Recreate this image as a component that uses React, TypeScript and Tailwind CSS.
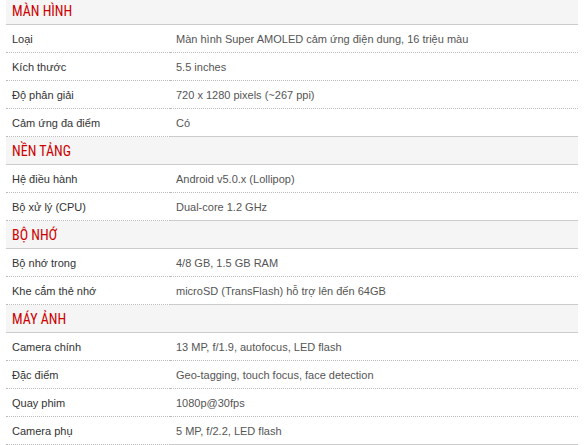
const sections: { title: string; rows: [string, string][] }[] = [
  {
    title: 'MÀN HÌNH',
    rows: [
      ['Loại', 'Màn hình Super AMOLED cảm ứng điện dung, 16 triệu màu'],
      ['Kích thước', '5.5 inches'],
      ['Độ phân giải', '720 x 1280 pixels (~267 ppi)'],
      ['Cảm ứng đa điểm', 'Có'],
    ],
  },
  {
    title: 'NỀN TẢNG',
    rows: [
      ['Hệ điều hành', 'Android v5.0.x (Lollipop)'],
      ['Bộ xử lý (CPU)', 'Dual-core 1.2 GHz'],
    ],
  },
  {
    title: 'BỘ NHỚ',
    rows: [
      ['Bộ nhớ trong', '4/8 GB, 1.5 GB RAM'],
      ['Khe cắm thẻ nhớ', 'microSD (TransFlash) hỗ trợ lên đến 64GB'],
    ],
  },
  {
    title: 'MÁY ẢNH',
    rows: [
      ['Camera chính', '13 MP, f/1.9, autofocus, LED flash'],
      ['Đặc điểm', 'Geo-tagging, touch focus, face detection'],
      ['Quay phim', '1080p@30fps'],
      ['Camera phụ', '5 MP, f/2.2, LED flash'],
    ],
  },
];

export default function App() {
  return (
    <div className="w-[586px] h-[445px] overflow-hidden bg-white">
      <div className="-mt-[3px] ml-[6px] w-[572px] font-['Liberation_Sans',Arial,sans-serif] text-[11px]">
        {sections.map((section) => (
          <div key={section.title}>
            <div className="h-[28px] flex items-center px-[6px] bg-[#f5f5f5] border-b border-[#cccccc]">
              <span className="font-['Roboto_Condensed','Liberation_Sans_Narrow',Roboto,sans-serif] text-[14px] text-[#cc0000] pt-[2px]">
                {section.title}
              </span>
            </div>
            {section.rows.map(([label, value], i) => {
              const last = i === section.rows.length - 1;
              return (
                <div key={label} className="flex h-[28px]">
                  <div className="w-[164px] px-[6px] pt-[2px] flex items-center text-[#333333] border-b border-dotted border-[#bbbbbb]">
                    {label}
                  </div>
                  <div
                    className={
                      last
                        ? 'flex-1 px-[6px] pt-[2px] flex items-center text-[#555555] border-b border-[#cccccc]'
                        : 'flex-1 px-[6px] pt-[2px] flex items-center text-[#555555] border-b border-dotted border-[#bbbbbb]'
                    }
                  >
                    {value}
                  </div>
                </div>
              );
            })}
          </div>
        ))}
      </div>
    </div>
  );
}
